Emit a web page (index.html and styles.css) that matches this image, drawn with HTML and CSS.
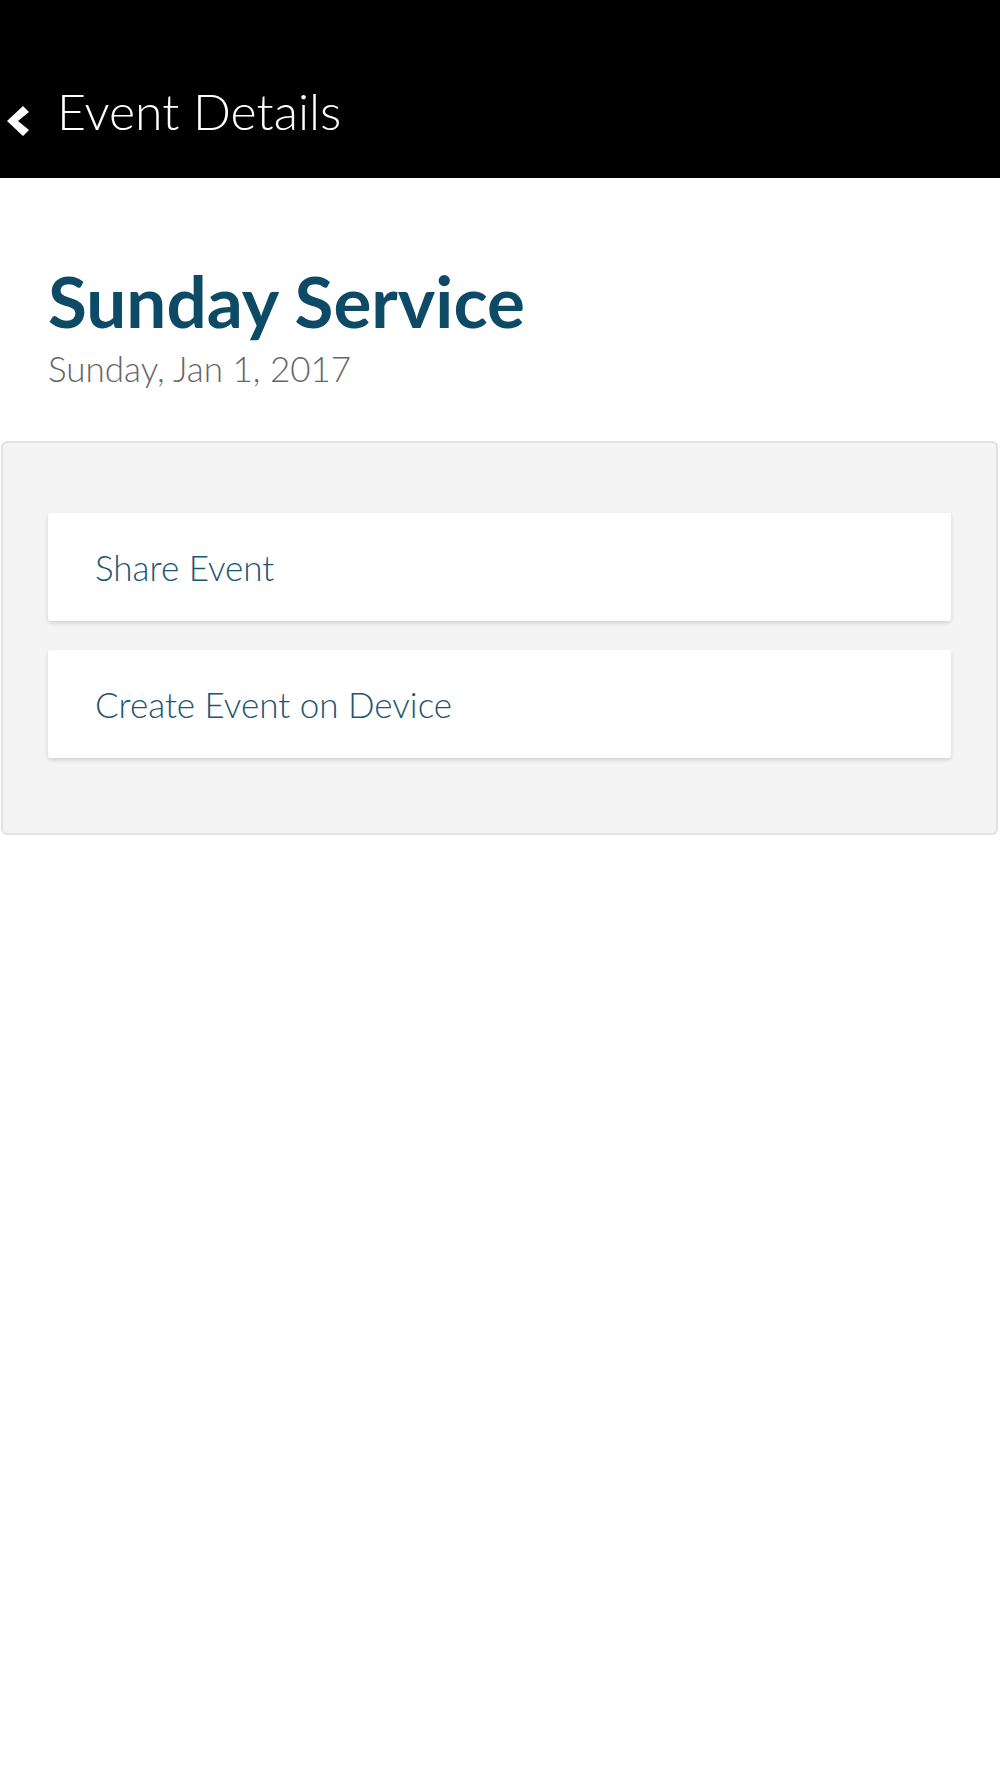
FILE: index.html
```html
<!DOCTYPE HTML>
<html>
<head>
    <meta name="viewport" content="width = device-width, user-scalable=0">
    <title>Event Details</title>
    <link rel="stylesheet" href="styles.css">
</head>
<body>
<header class="topbar">
    <button class="back" type="button">
        <svg viewBox="0 0 24 32">
            <path d="M 17,1 L 23,7 L 12,16 L 23,25 L 17,31 L 1,16 Z"/>
        </svg>
    </button>
    <h1 class="topbar-title">Event Details</h1>
</header>
<div class="event-head">
    <h2 class="event-name">Sunday Service</h2>
    <p class="event-date">Sunday, Jan 1, 2017</p>
</div>
<div class="actions">
    <a class="action" href="#">Share Event</a>
    <a class="action" href="#">Create Event on Device</a>
</div>
</body>
</html>
```

FILE: styles.css
```css
body, html {
    background-color: #ffffff;
    padding: 0;
    margin: 0;
    font-family: "Lato", "Open Sans", Sans-Serif;
}

.topbar {
    background-color: #000000;
    color: #ffffff;
    height: 178px;
    display: flex;
    align-items: flex-end;
    box-sizing: border-box;
    padding-bottom: 42px;
}

.back {
    width: 24px;
    height: 32px;
    padding: 0;
    margin: 0 27px 0 6px;
    background-color: transparent;
    border: none;
    fill: #ffffff;
    position: relative;
    top: 1px;
}

.back svg {
    display: block;
    width: 24px;
    height: 32px;
}

.topbar-title {
    margin: 0;
    font-size: 50px;
    font-weight: 300;
    line-height: 1;
}

.event-head {
    padding: 82px 48px 52px;
}

.event-name {
    margin: 0;
    font-size: 71px;
    font-weight: 700;
    line-height: 1.15;
    color: #0c4a66;
}

.event-date {
    margin: 5px 0 0;
    font-size: 35px;
    font-weight: 300;
    line-height: 1.2;
    color: #666666;
}

.actions {
    margin: 0 2px 0 1px;
    padding: 70px 45px 75px;
    background-color: #f4f4f4;
    border: 2px solid #e2e2e2;
    border-radius: 6px;
    display: flex;
    flex-direction: column;
    gap: 29px;
}

.action {
    display: flex;
    align-items: center;
    height: 108px;
    padding-left: 47px;
    background-color: #ffffff;
    border-radius: 3px;
    box-shadow: 0 2px 4px rgba(0, 0, 0, 0.15);
    color: #1b5672;
    font-size: 35px;
    font-weight: 300;
    text-decoration: none;
}
```
